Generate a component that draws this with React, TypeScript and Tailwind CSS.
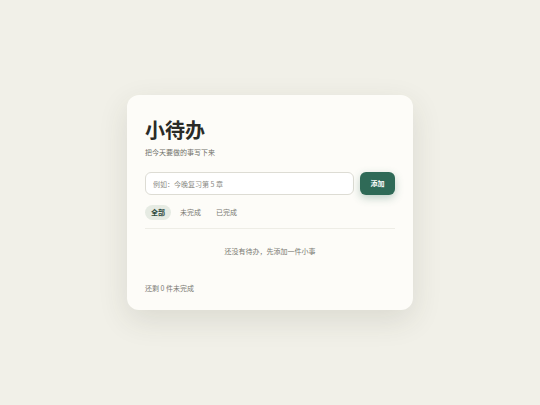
import React, { useState } from 'react';

export default function App() {
  const [filter, setFilter] = useState<'all' | 'active' | 'done'>('all');
  const [text, setText] = useState('');

  const tabs: { key: 'all' | 'active' | 'done'; label: string }[] = [
    { key: 'all', label: '全部' },
    { key: 'active', label: '未完成' },
    { key: 'done', label: '已完成' },
  ];

  return (
    <div
      className="min-h-screen w-full bg-[#f1f0e8] flex items-center justify-center"
      style={{ fontFamily: '"Noto Sans CJK SC", "Noto Sans", sans-serif' }}
    >
      {/* card */}
      <div className="w-[286px] rounded-[12px] bg-[#fdfcf8] px-[18px] pt-[23px] pb-[17px] shadow-[0_10px_30px_rgba(60,60,40,0.12)]">
        <h1 className="text-[20px] leading-[24px] font-bold text-[#2a2b27]">小待办</h1>
        <p className="mt-[5px] text-[7px] leading-[10px] text-[#707069]">把今天要做的事写下来</p>

        <div className="mt-[15px] flex items-center gap-[6px]">
          <input
            value={text}
            onChange={(e) => setText(e.target.value)}
            placeholder="例如：今晚复习第 5 章"
            className="h-[23px] flex-1 rounded-[6px] border border-[#dddcd4] bg-white px-[7px] text-[7px] text-[#333] placeholder:text-[#8a8a84] outline-none"
          />
          <button className="h-[23px] w-[35px] rounded-[6px] bg-[#2f6a57] text-[7px] font-bold text-white shadow-[0_3px_8px_rgba(47,106,87,0.3)]">
            添加
          </button>
        </div>

        <div className="mt-[10px] flex items-center gap-[3px]">
          {tabs.map((t) => (
            <button
              key={t.key}
              onClick={() => setFilter(t.key)}
              className={
                filter === t.key
                  ? 'h-[15px] rounded-full bg-[#e6ebe3] px-[6px] text-[7px] font-bold text-[#2d4a3e]'
                  : 'h-[15px] rounded-full px-[6px] text-[7px] text-[#7a7a73]'
              }
            >
              {t.label}
            </button>
          ))}
        </div>

        <div className="mt-[8px] h-px bg-[#eeede6]" />

        <p className="mt-[17px] text-center text-[7px] leading-[10px] text-[#7a7a73]">还没有待办，先添加一件小事</p>

        <p className="mt-[27px] text-[7px] leading-[10px] text-[#7a7a73]">还剩 0 件未完成</p>
      </div>
    </div>
  );
}
